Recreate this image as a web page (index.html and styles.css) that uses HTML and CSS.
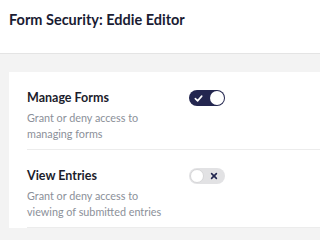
FILE: index.html
```html
<!DOCTYPE html>
<html>
<head>
<meta charset="utf-8">
<link rel="stylesheet" href="styles.css">
</head>
<body>
<header class="header">
  <h1 class="title">Form Security: Eddie Editor</h1>
</header>
<main class="main">
  <section class="card">
    <div class="row">
      <div class="text">
        <div class="name">Manage Forms</div>
        <div class="desc">Grant or deny access to managing forms</div>
      </div>
      <div class="toggle on">
        <svg class="icon check" viewBox="0 0 10 10" width="9" height="9"><path d="M1.5 5.2 L4 7.6 L8.6 2.4" fill="none" stroke="#fff" stroke-width="1.8" stroke-linecap="round" stroke-linejoin="round"/></svg>
        <span class="knob"></span>
      </div>
    </div>
    <div class="row">
      <div class="text">
        <div class="name">View Entries</div>
        <div class="desc">Grant or deny access to viewing of submitted entries</div>
      </div>
      <div class="toggle off">
        <span class="knob"></span>
        <svg class="icon cross" viewBox="0 0 10 10" width="8" height="8"><path d="M2 2 L8 8 M8 2 L2 8" fill="none" stroke="#22264f" stroke-width="2" stroke-linecap="round"/></svg>
      </div>
    </div>
  </section>
</main>
</body>
</html>
```
FILE: styles.css
```css
html, body {
  margin: 0;
  padding: 0;
}
body {
  height: 234px;
  overflow: hidden;
  background: #f3f3f3;
  font-family: Lato, "Open Sans", sans-serif;
}
.header {
  box-sizing: border-box;
  height: 54px;
  padding: 10px 0 0 9px;
  background: #fff;
  border-bottom: 1px solid #e4e4e4;
}
.title {
  margin: 0;
  font-size: 14.5px;
  line-height: 20px;
  font-weight: 700;
  color: #1a1c33;
}
.main {
  padding: 18px 0 0 9px;
}
.card {
  background: #fff;
  padding-left: 18px;
}
.row {
  display: flex;
  align-items: flex-start;
  gap: 12px;
  padding: 16px 0 7px;
  border-bottom: 1px solid #ececec;
}
.text {
  width: 150px;
  flex: none;
}
.name {
  font-size: 12.5px;
  line-height: 20px;
  font-weight: 700;
  color: #1c1d2c;
}
.desc {
  margin-top: 2px;
  font-size: 10.8px;
  line-height: 16px;
  color: #8b9099;
}
.toggle {
  box-sizing: border-box;
  flex: none;
  width: 36px;
  height: 16px;
  margin-top: 2px;
  border-radius: 8px;
  display: flex;
  align-items: center;
  justify-content: space-between;
}
.toggle.on {
  background: #23264f;
  padding: 0 1px 0 5px;
}
.toggle.off {
  background: #e2e2e4;
  padding: 0 7px 0 1px;
}
.knob {
  box-sizing: border-box;
  width: 14px;
  height: 14px;
  border-radius: 50%;
  background: #fff;
}
.toggle.off .knob {
  border: 1px solid #d6d6d8;
}
.icon {
  display: block;
}
```
